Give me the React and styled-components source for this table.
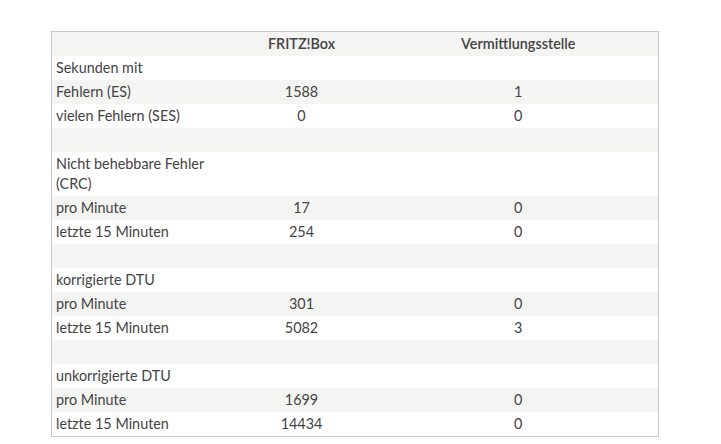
import React from 'react';
import styled, { createGlobalStyle } from 'styled-components';

const GlobalStyle = createGlobalStyle`
    body {
        margin: 0;
        background: #fff;
        font-family: Lato, "Liberation Sans", sans-serif;
    }
`

const Page = styled.div`
    padding: 31px 62px 0 51px;
`

const Table = styled.table`
    width: 608px;
    border-collapse: collapse;
    border: 1px solid #c9c9c5;
    table-layout: fixed;
    font-size: 14.4px;
    line-height: 20px;
    color: #444;
`

const Head = styled.th`
    background: #f4f4f2;
    font-weight: 600;
    text-align: center;
    padding: 2px 4px;
    height: 20px;
`

const Row = styled.tr`
    &:nth-child(even) td {
        background: #f4f4f2;
    }
`

const Cell = styled.td`
    padding: 2px 4px;
    height: 20px;
    vertical-align: top;
    text-align: ${(p) => (p.label ? 'left' : 'center')};
`

const rows = [
    ['Sekunden mit', '', ''],
    ['Fehlern (ES)', '1588', '1'],
    ['vielen Fehlern (SES)', '0', '0'],
    ['', '', ''],
    ['Nicht behebbare Fehler (CRC)', '', ''],
    ['pro Minute', '17', '0'],
    ['letzte 15 Minuten', '254', '0'],
    ['', '', ''],
    ['korrigierte DTU', '', ''],
    ['pro Minute', '301', '0'],
    ['letzte 15 Minuten', '5082', '3'],
    ['', '', ''],
    ['unkorrigierte DTU', '', ''],
    ['pro Minute', '1699', '0'],
    ['letzte 15 Minuten', '14434', '0'],
]

export default function App() {
    return (
        <Page>
            <GlobalStyle />
            <Table>
                <colgroup>
                    <col style={{ width: 173 }} />
                    <col style={{ width: 154 }} />
                    <col style={{ width: 280 }} />
                </colgroup>
                <thead>
                    <tr>
                        <Head></Head>
                        <Head>FRITZ!Box</Head>
                        <Head>Vermittlungsstelle</Head>
                    </tr>
                </thead>
                <tbody>
                    {rows.map((r, i) => (
                        <Row key={i}>
                            <Cell label="1">{r[0]}</Cell>
                            <Cell>{r[1]}</Cell>
                            <Cell>{r[2]}</Cell>
                        </Row>
                    ))}
                </tbody>
            </Table>
        </Page>
    )
}
